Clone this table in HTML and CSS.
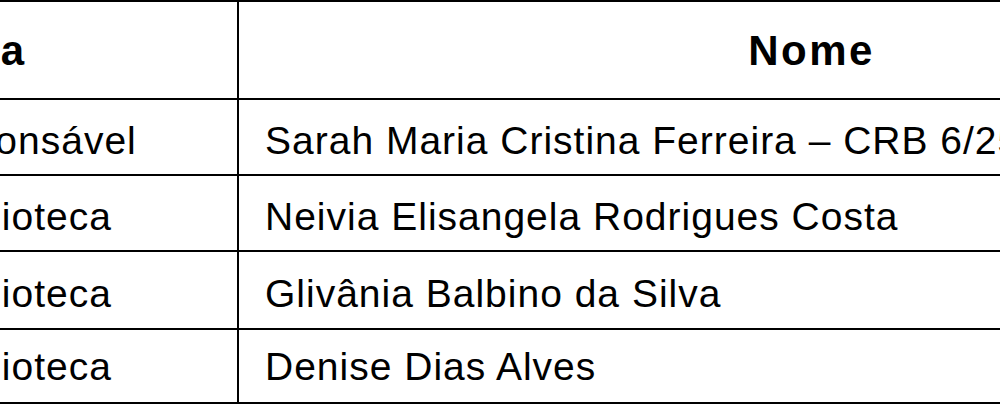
FILE: index.html
```html
<!DOCTYPE html>
<html lang="pt-BR">
<head>
<meta charset="utf-8">
<title>Equipe da Biblioteca</title>
<link rel="stylesheet" href="styles.css">
</head>
<body>
<div class="frame">
  <div class="staff-table">
    <div class="cell head">Carreira</div>
    <div class="cell head">Nome</div>
    <div class="cell">Bibliotecária Responsável</div>
    <div class="cell">Sarah Maria Cristina Ferreira – CRB 6/2581</div>
    <div class="cell">Assistente em Biblioteca</div>
    <div class="cell">Neivia Elisangela Rodrigues Costa</div>
    <div class="cell">Assistente em Biblioteca</div>
    <div class="cell">Glivânia Balbino da Silva</div>
    <div class="cell last">Assistente em Biblioteca</div>
    <div class="cell last">Denise Dias Alves</div>
  </div>
</div>
</body>
</html>
```

FILE: styles.css
```css
html, body {
  margin: 0;
  padding: 0;
  background: #ffffff;
}

.frame {
  width: 1000px;
  height: 406px;
  overflow: hidden;
}

.staff-table {
  display: grid;
  grid-template-columns: 598px 1147px;
  grid-template-rows: 98px 76px 76px 78px 74px;
  width: max-content;
  margin-left: -361px;
  border-top: 2px solid #000000;
  border-left: 2px solid #000000;
  font-family: "Liberation Sans", Arial, sans-serif;
  color: #000000;
}

.cell {
  box-sizing: border-box;
  border-right: 2px solid #000000;
  border-bottom: 2px solid #000000;
  display: flex;
  align-items: center;
  padding: 7px 0 0 26px;
  font-size: 39px;
  letter-spacing: 1px;
  white-space: nowrap;
  overflow: hidden;
}

.cell:nth-child(odd) {
  padding-left: 22px;
}

.cell.last {
  padding-top: 1px;
}

.cell.head {
  justify-content: center;
  padding: 2px 0 0 0;
  font-size: 42px;
  font-weight: bold;
  letter-spacing: 2.5px;
}

.cell.head:first-child {
  padding-right: 6px;
}
```
